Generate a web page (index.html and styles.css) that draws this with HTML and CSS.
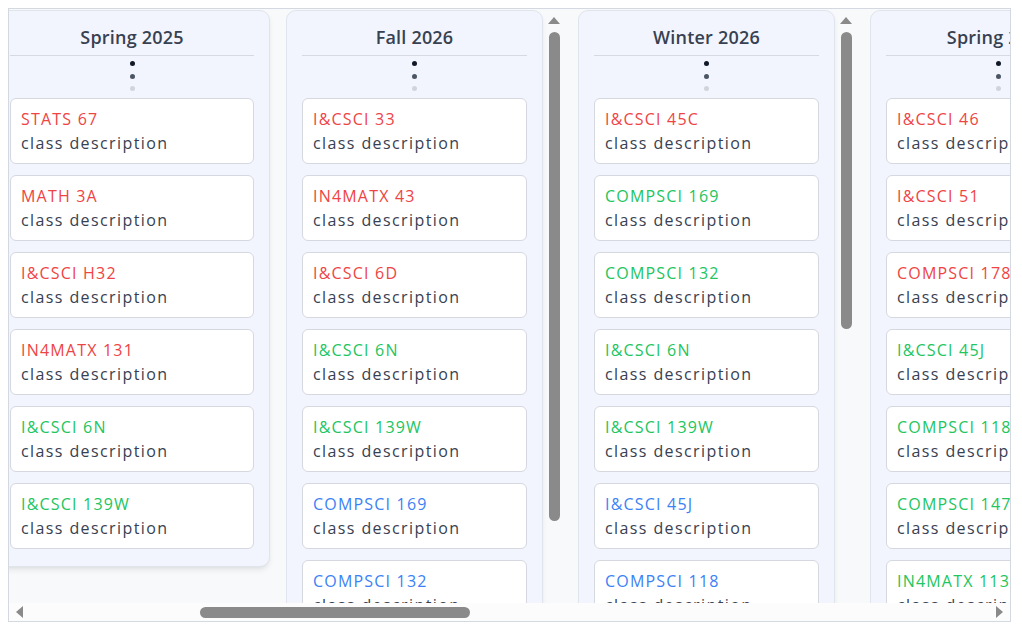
FILE: index.html
```html
<!DOCTYPE html>
<html lang="en">
<head>
<meta charset="utf-8">
<title>Course Planner</title>
<link rel="stylesheet" href="styles.css">
<script src="script.js" defer></script>
</head>
<body>
<div class="board">
  <div class="board-viewport">
    <div class="terms">
      <section class="term">
        <div class="term-box">
          <h2 class="term-title">Fall 2025</h2>
          <div class="dots"><span></span><span></span><span></span></div>
          <ul class="course-list">
            <li class="course"><span class="course-code c-red">I&amp;CSCI 31</span><span class="course-desc">class description</span></li>
            <li class="course"><span class="course-code c-red">MATH 2A</span><span class="course-desc">class description</span></li>
            <li class="course"><span class="course-code c-red">WRITING 40</span><span class="course-desc">class description</span></li>
            <li class="course"><span class="course-code c-green">I&amp;CSCI 6B</span><span class="course-desc">class description</span></li>
            <li class="course"><span class="course-code c-green">IN4MATX 43</span><span class="course-desc">class description</span></li>
          </ul>
        </div>
      </section>
      <section class="term">
        <div class="term-box">
          <h2 class="term-title">Winter 2025</h2>
          <div class="dots"><span></span><span></span><span></span></div>
          <ul class="course-list">
            <li class="course"><span class="course-code c-red">I&amp;CSCI 32</span><span class="course-desc">class description</span></li>
            <li class="course"><span class="course-code c-red">MATH 2B</span><span class="course-desc">class description</span></li>
            <li class="course"><span class="course-code c-red">WRITING 50</span><span class="course-desc">class description</span></li>
            <li class="course"><span class="course-code c-green">I&amp;CSCI 6D</span><span class="course-desc">class description</span></li>
            <li class="course"><span class="course-code c-green">STATS 67</span><span class="course-desc">class description</span></li>
          </ul>
        </div>
      </section>
      <section class="term">
        <div class="term-box">
          <h2 class="term-title">Spring 2025</h2>
          <div class="dots"><span></span><span></span><span></span></div>
          <ul class="course-list">
            <li class="course"><span class="course-code c-red">STATS 67</span><span class="course-desc">class description</span></li>
            <li class="course"><span class="course-code c-red">MATH 3A</span><span class="course-desc">class description</span></li>
            <li class="course"><span class="course-code c-red">I&amp;CSCI H32</span><span class="course-desc">class description</span></li>
            <li class="course"><span class="course-code c-red">IN4MATX 131</span><span class="course-desc">class description</span></li>
            <li class="course"><span class="course-code c-green">I&amp;CSCI 6N</span><span class="course-desc">class description</span></li>
            <li class="course"><span class="course-code c-green">I&amp;CSCI 139W</span><span class="course-desc">class description</span></li>
          </ul>
        </div>
      </section>
      <section class="term term--long">
        <div class="term-box">
          <h2 class="term-title">Fall 2026</h2>
          <div class="dots"><span></span><span></span><span></span></div>
          <ul class="course-list">
            <li class="course"><span class="course-code c-red">I&amp;CSCI 33</span><span class="course-desc">class description</span></li>
            <li class="course"><span class="course-code c-red">IN4MATX 43</span><span class="course-desc">class description</span></li>
            <li class="course"><span class="course-code c-red">I&amp;CSCI 6D</span><span class="course-desc">class description</span></li>
            <li class="course"><span class="course-code c-green">I&amp;CSCI 6N</span><span class="course-desc">class description</span></li>
            <li class="course"><span class="course-code c-green">I&amp;CSCI 139W</span><span class="course-desc">class description</span></li>
            <li class="course"><span class="course-code c-blue">COMPSCI 169</span><span class="course-desc">class description</span></li>
            <li class="course"><span class="course-code c-blue">COMPSCI 132</span><span class="course-desc">class description</span></li>
            <li class="course"><span class="course-code c-blue">COMPSCI 118</span><span class="course-desc">class description</span></li>
          </ul>
        </div>
        <div class="vscroll" aria-hidden="true"><span class="vscroll-up"></span><span class="vscroll-thumb" style="height:489px"></span></div>
      </section>
      <section class="term term--long">
        <div class="term-box">
          <h2 class="term-title">Winter 2026</h2>
          <div class="dots"><span></span><span></span><span></span></div>
          <ul class="course-list">
            <li class="course"><span class="course-code c-red">I&amp;CSCI 45C</span><span class="course-desc">class description</span></li>
            <li class="course"><span class="course-code c-green">COMPSCI 169</span><span class="course-desc">class description</span></li>
            <li class="course"><span class="course-code c-green">COMPSCI 132</span><span class="course-desc">class description</span></li>
            <li class="course"><span class="course-code c-green">I&amp;CSCI 6N</span><span class="course-desc">class description</span></li>
            <li class="course"><span class="course-code c-green">I&amp;CSCI 139W</span><span class="course-desc">class description</span></li>
            <li class="course"><span class="course-code c-blue">I&amp;CSCI 45J</span><span class="course-desc">class description</span></li>
            <li class="course"><span class="course-code c-blue">COMPSCI 118</span><span class="course-desc">class description</span></li>
            <li class="course"><span class="course-code c-blue">COMPSCI 147</span><span class="course-desc">class description</span></li>
            <li class="course"><span class="course-code c-blue">COMPSCI 178</span><span class="course-desc">class description</span></li>
            <li class="course"><span class="course-code c-blue">IN4MATX 113</span><span class="course-desc">class description</span></li>
            <li class="course"><span class="course-code c-blue">I&amp;CSCI 46</span><span class="course-desc">class description</span></li>
            <li class="course"><span class="course-code c-blue">I&amp;CSCI 51</span><span class="course-desc">class description</span></li>
            <li class="course"><span class="course-code c-blue">COMPSCI 161</span><span class="course-desc">class description</span></li>
            <li class="course"><span class="course-code c-blue">COMPSCI 171</span><span class="course-desc">class description</span></li>
          </ul>
        </div>
        <div class="vscroll" aria-hidden="true"><span class="vscroll-up"></span><span class="vscroll-thumb" style="height:297px"></span></div>
      </section>
      <section class="term term--long">
        <div class="term-box">
          <h2 class="term-title">Spring 2026</h2>
          <div class="dots"><span></span><span></span><span></span></div>
          <ul class="course-list">
            <li class="course"><span class="course-code c-red">I&amp;CSCI 46</span><span class="course-desc">class description</span></li>
            <li class="course"><span class="course-code c-red">I&amp;CSCI 51</span><span class="course-desc">class description</span></li>
            <li class="course"><span class="course-code c-red">COMPSCI 178</span><span class="course-desc">class description</span></li>
            <li class="course"><span class="course-code c-green">I&amp;CSCI 45J</span><span class="course-desc">class description</span></li>
            <li class="course"><span class="course-code c-green">COMPSCI 118</span><span class="course-desc">class description</span></li>
            <li class="course"><span class="course-code c-green">COMPSCI 147</span><span class="course-desc">class description</span></li>
            <li class="course"><span class="course-code c-green">IN4MATX 113</span><span class="course-desc">class description</span></li>
            <li class="course"><span class="course-code c-blue">COMPSCI 161</span><span class="course-desc">class description</span></li>
            <li class="course"><span class="course-code c-blue">COMPSCI 171</span><span class="course-desc">class description</span></li>
          </ul>
        </div>
        <div class="vscroll" aria-hidden="true"><span class="vscroll-up"></span><span class="vscroll-thumb" style="height:410px"></span></div>
      </section>
      <section class="term">
        <div class="term-box">
          <h2 class="term-title">Fall 2027</h2>
          <div class="dots"><span></span><span></span><span></span></div>
          <ul class="course-list">
            <li class="course"><span class="course-code c-green">COMPSCI 161</span><span class="course-desc">class description</span></li>
            <li class="course"><span class="course-code c-blue">COMPSCI 171</span><span class="course-desc">class description</span></li>
            <li class="course"><span class="course-code c-blue">COMPSCI 143A</span><span class="course-desc">class description</span></li>
          </ul>
        </div>
      </section>
      <section class="term">
        <div class="term-box">
          <h2 class="term-title">Winter 2027</h2>
          <div class="dots"><span></span><span></span><span></span></div>
          <ul class="course-list">
            <li class="course"><span class="course-code c-blue">COMPSCI 122A</span><span class="course-desc">class description</span></li>
            <li class="course"><span class="course-code c-blue">COMPSCI 141</span><span class="course-desc">class description</span></li>
          </ul>
        </div>
      </section>
      <section class="term">
        <div class="term-box">
          <h2 class="term-title">Spring 2027</h2>
          <div class="dots"><span></span><span></span><span></span></div>
          <ul class="course-list">
            <li class="course"><span class="course-code c-blue">COMPSCI 145</span><span class="course-desc">class description</span></li>
            <li class="course"><span class="course-code c-blue">COMPSCI 151</span><span class="course-desc">class description</span></li>
          </ul>
        </div>
      </section>
      <section class="term">
        <div class="term-box">
          <h2 class="term-title">Fall 2028</h2>
          <div class="dots"><span></span><span></span><span></span></div>
          <ul class="course-list">
            <li class="course"><span class="course-code c-blue">COMPSCI 175</span><span class="course-desc">class description</span></li>
          </ul>
        </div>
      </section>
      <section class="term">
        <div class="term-box">
          <h2 class="term-title">Winter 2028</h2>
          <div class="dots"><span></span><span></span><span></span></div>
          <ul class="course-list">
            <li class="course"><span class="course-code c-blue">COMPSCI 177</span><span class="course-desc">class description</span></li>
          </ul>
        </div>
      </section>
      <section class="term">
        <div class="term-box">
          <h2 class="term-title">Spring 2028</h2>
          <div class="dots"><span></span><span></span><span></span></div>
          <ul class="course-list">
            <li class="course"><span class="course-code c-blue">COMPSCI 178</span><span class="course-desc">class description</span></li>
          </ul>
        </div>
      </section>
    </div>
  </div>
  <div class="hscroll" aria-hidden="true">
    <span class="hscroll-left"></span>
    <div class="hscroll-track"><span class="hscroll-thumb" style="margin-left:177px;width:270px"></span></div>
    <span class="hscroll-right"></span>
  </div>
</div>
</body>
</html>
```

FILE: styles.css
```css
html {
  overflow: hidden;
  background: #ffffff;
}

body {
  margin: 8px 0 0 8px;
  font-family: "Open Sans", "Noto Sans", sans-serif;
  color: #374151;
}

.board {
  box-sizing: border-box;
  width: 1003px;
  height: 614px;
  border: 1px solid #d4d8e0;
  background: #f8f9fb;
  display: flex;
  flex-direction: column;
}

.board-viewport {
  flex: 1;
  min-height: 0;
  overflow: hidden;
}

.terms {
  display: flex;
  align-items: flex-start;
  gap: 16px;
  padding: 1px 56px 0 56px;
  width: max-content;
}

.term {
  flex: none;
  width: 276px;
  display: flex;
  align-items: flex-start;
}

.term--long {
  max-height: 605px;
  overflow: hidden;
}

.term-box {
  flex: 1;
  min-width: 0;
  box-sizing: border-box;
  background: #f2f5fd;
  border: 1px solid #e0e4ed;
  border-radius: 10px;
  padding: 12px 15px 17px;
  box-shadow: 0 4px 6px -1px rgba(0, 0, 0, 0.08), 0 2px 4px -2px rgba(0, 0, 0, 0.06);
}

.term--long .term-box {
  margin-right: 3px;
}

.vscroll {
  flex: none;
  align-self: stretch;
  width: 16px;
  display: flex;
  flex-direction: column;
  align-items: center;
}

.vscroll-up {
  width: 0;
  height: 0;
  margin-top: 7px;
  border-left: 6.5px solid transparent;
  border-right: 6.5px solid transparent;
  border-bottom: 7px solid #8a8a8a;
}

.vscroll-thumb {
  width: 11px;
  margin-top: 8px;
  border-radius: 6px;
  background: #8a8a8a;
}

.term-title {
  margin: 0;
  padding-bottom: 4px;
  border-bottom: 1px solid #d5d9e1;
  font-size: 18px;
  line-height: 28px;
  font-weight: 600;
  text-align: center;
  color: #374151;
  letter-spacing: 0.2px;
}

.dots {
  display: flex;
  flex-direction: column;
  align-items: center;
  gap: 7.5px;
  margin: 5px 0 7px;
}

.dots span {
  width: 5px;
  height: 5px;
  border-radius: 50%;
  background: #111827;
}

.dots span:nth-child(2) {
  background: #4b5563;
}

.dots span:nth-child(3) {
  background: #d1d5db;
}

.course-list {
  list-style: none;
  margin: 0;
  padding: 0;
  display: flex;
  flex-direction: column;
  gap: 11px;
}

.course {
  display: flex;
  flex-direction: column;
  background: #ffffff;
  border: 1px solid #d5d8df;
  border-radius: 6px;
  padding: 8px 10px;
  font-size: 16px;
  line-height: 24px;
  white-space: nowrap;
}

.course-code {
  letter-spacing: 1.2px;
}

.course-code.c-red {
  color: #ef4444;
}

.course-code.c-green {
  color: #22c55e;
}

.course-code.c-blue {
  color: #3b82f6;
}

.course-desc {
  color: #374151;
  letter-spacing: 1.4px;
}

.hscroll {
  flex: none;
  height: 18px;
  padding: 0 7px;
  display: flex;
  align-items: center;
  background: #fcfcfc;
}

.hscroll-left {
  width: 0;
  height: 0;
  border-top: 6px solid transparent;
  border-bottom: 6px solid transparent;
  border-right: 7px solid #8a8a8a;
}

.hscroll-right {
  width: 0;
  height: 0;
  border-top: 6px solid transparent;
  border-bottom: 6px solid transparent;
  border-left: 7px solid #8a8a8a;
}

.hscroll-track {
  flex: 1;
  display: flex;
  align-items: center;
}

.hscroll-thumb {
  height: 11px;
  border-radius: 6px;
  background: #8a8a8a;
}
```

FILE: script.js
```js
document.querySelector('.board-viewport').scrollLeft = 655;
```
